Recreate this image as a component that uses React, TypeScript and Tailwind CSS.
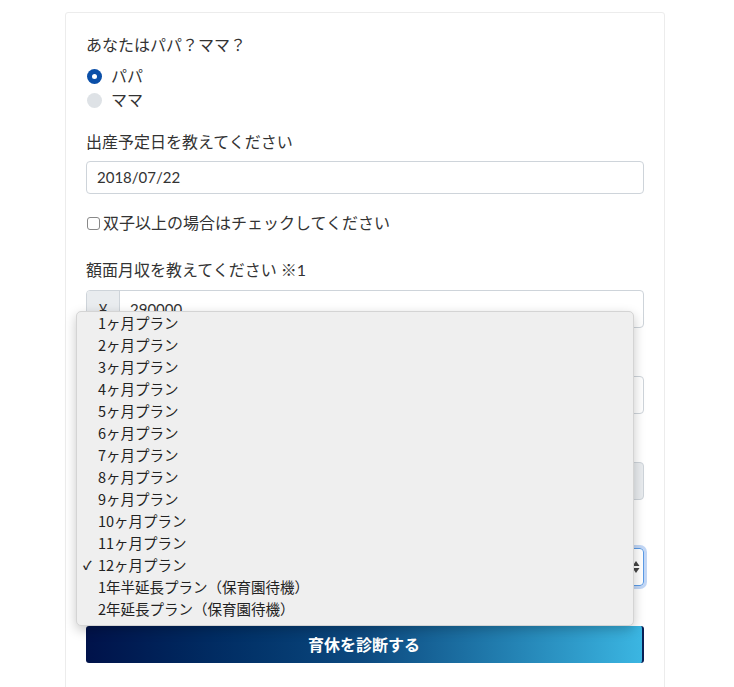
import React from "react";

const plans = [
  "1ヶ月プラン",
  "2ヶ月プラン",
  "3ヶ月プラン",
  "4ヶ月プラン",
  "5ヶ月プラン",
  "6ヶ月プラン",
  "7ヶ月プラン",
  "8ヶ月プラン",
  "9ヶ月プラン",
  "10ヶ月プラン",
  "11ヶ月プラン",
  "12ヶ月プラン",
  "1年半延長プラン（保育園待機）",
  "2年延長プラン（保育園待機）",
];

export default function App() {
  return (
    <div className="relative min-h-[687px] bg-white font-['Lato','Noto_Sans_CJK_JP',sans-serif] text-[#333] overflow-hidden">
      <div className="pt-[12px]">
        <div className="ml-[65px] w-[600px] border border-[#ececec] rounded-[3px] px-[20px] pt-[20px] pb-[40px]">
          {/* Q1 */}
          <div className="text-[16px] leading-[24px] mb-[7px]">あなたはパパ？ママ？</div>
          <div className="flex items-center h-[24px] text-[16px]">
            <span className="w-[15px] h-[15px] rounded-full bg-[#0b4fa8] flex items-center justify-center mr-[9px] ml-[1px]">
              <span className="w-[5px] h-[5px] rounded-full bg-white" />
            </span>
            パパ
          </div>
          <div className="flex items-center h-[24px] text-[16px]">
            <span className="w-[15px] h-[15px] rounded-full bg-[#dee2e6] mr-[9px] ml-[1px]" />
            ママ
          </div>

          {/* Q2 */}
          <div className="mt-[18px] text-[16px] leading-[24px] mb-[7px]">出産予定日を教えてください</div>
          <div className="h-[33px] border border-[#ced4da] rounded-[4px] flex items-center px-[10px] text-[15px] text-[#333]">
            2018/07/22
          </div>

          {/* checkbox */}
          <div className="mt-[17px] flex items-center h-[24px] text-[16px]">
            <span className="w-[13px] h-[13px] border border-[#888] rounded-[3px] bg-white mr-[3px] ml-[1px]" />
            双子以上の場合はチェックしてください
          </div>

          {/* Q3 */}
          <div className="mt-[23px] text-[16px] leading-[24px] mb-[8px]">額面月収を教えてください ※1</div>
          <div className="h-[38px] flex border border-[#ced4da] rounded-[4px] overflow-hidden">
            <div className="w-[33px] bg-[#e9ecef] border-r border-[#ced4da] flex items-center justify-center text-[15px]">¥</div>
            <div className="flex items-center px-[10px] text-[15px]">290000</div>
          </div>

          {/* fields hidden behind the open dropdown */}
          <div className="mt-[16px] h-[24px] mb-[8px]" />
          <div className="h-[38px] border border-[#ced4da] rounded-[4px]" />

          <div className="mt-[16px] h-[24px] mb-[8px]" />
          <div className="h-[38px] border border-[#ced4da] rounded-[4px] bg-[#e9ecef]" />

          <div className="mt-[16px] h-[24px] mb-[8px]" />
          <div className="h-[38px] border border-[#5b9be6] rounded-[4px] shadow-[0_0_0_3px_rgba(80,140,230,0.35)] flex items-center justify-end pr-[3px]">
            <svg width="8" height="14" viewBox="0 0 8 14">
              <path d="M4 1 L7.5 6 H0.5 Z" fill="#444" />
              <path d="M4 13 L7.5 8 H0.5 Z" fill="#444" />
            </svg>
          </div>

          <div className="mt-[40px] h-[37px] rounded-[3px] border-r-2 border-[#0a1f55] bg-gradient-to-r from-[#00124a] via-[#0d4a80] to-[#3bb6e2] flex items-center justify-center text-white text-[16px] font-bold">
            育休を診断する
          </div>
        </div>
      </div>

      {/* dropdown menu */}
      <div className="absolute left-[76px] top-[311px] w-[558px] h-[315px] bg-[#efefef] rounded-[5px] border border-[#d4d4d4] shadow-[0_4px_12px_rgba(0,0,0,0.22)] font-['Noto_Sans_CJK_JP',sans-serif] text-[14.5px] text-[#222]">
        {plans.map((p, i) => (
          <div key={p} className="h-[22px] flex items-center relative pl-[21px]">
            {i === 11 && <span className="absolute left-[6px] text-[12px] font-bold">✓</span>}
            {p}
          </div>
        ))}
      </div>
    </div>
  );
}
